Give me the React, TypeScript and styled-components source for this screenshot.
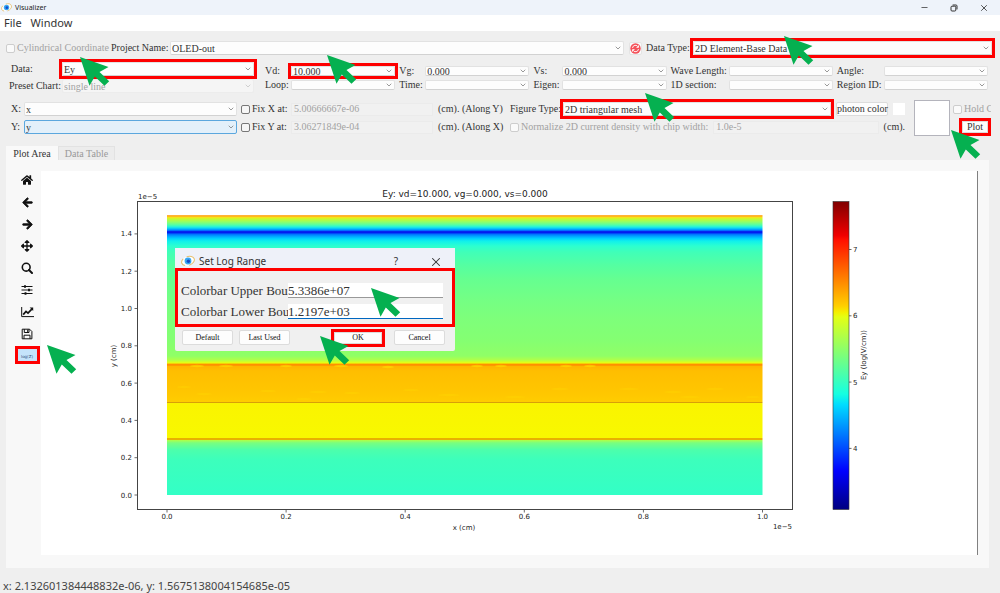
import React from "react";
import styled, { createGlobalStyle, css } from "styled-components";
import { ChevronDown, Minus, X } from "lucide-react";
import { FaHome, FaArrowLeft, FaArrowRight, FaArrowsAlt } from "react-icons/fa";

const GlobalStyle = createGlobalStyle`
  * { box-sizing: border-box; }
  body { margin: 0; background: #efefef; }
  button, input, select { font: inherit; color: inherit; margin: 0; }
`;

const serif = `"Liberation Serif", serif`;
const sans = `"Noto Sans", "Open Sans", sans-serif`;

const marked = css`
  outline: 3px solid #fe0000;
  border-radius: 0;
`;

const Window = styled.div`
  min-height: 100vh;
  display: flex;
  flex-direction: column;
  overflow: hidden;
  background: #efefef;
  color: #333;
  font: 10px/14px ${serif};
`;

const TitleBar = styled.header`
  display: flex;
  align-items: center;
  gap: 3px;
  height: 15px;
  padding: 0 11px 0 1px;
  background: #eef3fa;
  font: 7px/15px ${sans};
  color: #222;
`;

const WindowTitle = styled.h1`
  flex: 1;
  margin: 0;
  font: inherit;
`;

const CaptionButtons = styled.div`
  display: flex;
  gap: 20px;
`;

const CaptionButton = styled.button`
  display: grid;
  place-items: center;
  width: 10px;
  height: 12px;
  padding: 0;
  border: 0;
  background: none;
  color: #333;
`;

const MenuBar = styled.nav`
  display: flex;
  gap: 9px;
  height: 16px;
  padding: 0 4px;
  background: #fff;
`;

const MenuItem = styled.button`
  padding: 0;
  border: 0;
  background: none;
  font: 11px/16px ${sans};
  color: #333;
`;

const Main = styled.main`
  flex: 1;
  display: flex;
  flex-direction: column;
`;

const ProjectRow = styled.div`
  display: grid;
  grid-template-columns: 105px 59px minmax(0, 454fr) 22px 47px minmax(0, 299fr);
  align-items: center;
  height: 14px;
  margin-top: 10px;
  padding: 0 8px 0 6px;
`;

const Label = styled.label<{ $indent?: number }>`
  padding-left: ${(p) => p.$indent ?? 0}px;
  white-space: nowrap;
`;

const CheckLabel = styled.label<{ $disabled?: boolean }>`
  display: flex;
  align-items: center;
  gap: 2px;
  overflow: hidden;
  white-space: nowrap;
  color: ${(p) => (p.$disabled ? "#a2a2a2" : "inherit")};
`;

const Check = styled.input.attrs({ type: "checkbox" })`
  appearance: none;
  flex: none;
  width: 9px;
  height: 9px;
  border: 1px solid #777;
  border-radius: 2px;
  background: #f6f6f6;
  &:disabled {
    border-color: #cdcdcd;
    background: #fafafa;
  }
`;

const SelectFrame = styled.div<{ $marked?: boolean; $height?: number }>`
  position: relative;
  flex: 1;
  min-width: 0;
  height: ${(p) => p.$height ?? 14}px;
  ${(p) => p.$marked && marked}
`;

const SelectInput = styled.select<{ $active?: boolean }>`
  appearance: none;
  display: block;
  width: 100%;
  height: 100%;
  padding: 0 12px 0 1px;
  border: 1px solid ${(p) => (p.$active ? "#5ba7de" : "#e2e2e2")};
  border-bottom-color: ${(p) => (p.$active ? "#5ba7de" : "#d2d2d2")};
  border-radius: 2px;
  background: ${(p) => (p.$active ? "#e3f0fa" : "#fdfdfd")};
  color: #333;
  opacity: 1;
  &:disabled {
    border-color: #ececec;
    background: #f5f5f5;
    color: #a2a2a2;
  }
`;

const Arrow = styled(ChevronDown)`
  position: absolute;
  right: 2px;
  top: 50%;
  margin-top: -4px;
  pointer-events: none;
`;

const RefreshButton = styled.button`
  justify-self: center;
  display: grid;
  place-items: center;
  width: 13px;
  height: 13px;
  padding: 0;
  border: 1px solid #e4e4e4;
  border-radius: 2px;
  background: #fafafa;
`;

const DataRow = styled.div`
  display: grid;
  grid-template-columns: 53px minmax(0, 192fr) minmax(0, 734fr);
  margin-top: 7px;
  padding: 0 12px 0 9px;
`;

const DataFields = styled.div`
  display: grid;
  grid-column: span 2;
  grid-template-columns: 53px minmax(0, 1fr);
  grid-auto-rows: 14px;
  row-gap: 3px;
`;

const BiasFields = styled.div`
  display: grid;
  grid-template-columns: 37px minmax(0, 1fr) 30px minmax(0, 1fr) 33px minmax(0, 1fr) 62px minmax(0, 1fr) 51px minmax(0, 1fr);
  grid-auto-rows: 10px;
  row-gap: 4px;
  padding-top: 4px;
  line-height: 10px;
`;

const AxisRow = styled.div`
  display: grid;
  grid-template-columns: 13px minmax(0, 213fr) 54px minmax(0, 142fr) 77px minmax(0, 395fr) 45px 42px;
  grid-template-rows: 14px 14px;
  row-gap: 4px;
  align-items: center;
  margin-top: 9px;
  padding: 0 8px 0 11px;
`;

const FixCheck = styled(CheckLabel)`
  padding-left: 4px;
`;

const FlatInput = styled.input`
  width: 100%;
  min-width: 0;
  flex: 1;
  height: 13px;
  padding: 0 2px;
  border: 1px solid #ebebeb;
  background: #f1f1f1;
  color: #a2a2a2;
`;

const FigureLine = styled.div`
  display: flex;
  align-items: center;
  gap: 5px;
`;

const FigureLabel = styled(Label)`
  width: 48px;
`;

const Button = styled.button<{ $marked?: boolean }>`
  height: 14px;
  padding: 0;
  border: 1px solid #dcdcdc;
  border-radius: 2px;
  background: #fdfdfd;
  line-height: 12px;
  white-space: nowrap;
  ${(p) => p.$marked && marked}
`;

const PhotonButton = styled(Button)`
  width: 52px;
`;

const Swatch = styled.div`
  width: 12px;
  height: 12px;
  background: #fff;
`;

const Preview = styled.div`
  grid-row: 1 / span 2;
  grid-column: 7;
  place-self: center end;
  width: 36px;
  height: 36px;
  border: 1px solid #b4b4bc;
  background: #fff;
`;

const HoldCell = styled.div`
  grid-column: 8;
  padding: 0 1px 0 3px;
  overflow: hidden;
`;

const PlotCell = styled.div`
  position: relative;
  grid-column: 8;
  padding: 0 4px 0 12px;
`;

const PlotButton = styled(Button)`
  display: block;
  width: 100%;
  height: 12px;
  line-height: 10px;
`;

const Tabs = styled.div`
  display: flex;
  height: 14px;
  margin: 12px 0 0 6px;
`;

const Tab = styled.button<{ $active?: boolean }>`
  width: ${(p) => (p.$active ? 52 : 57)}px;
  padding: 0;
  border: 1px solid ${(p) => (p.$active ? "#f9f9f9" : "#e2e2e2")};
  border-bottom: 0;
  background: ${(p) => (p.$active ? "#f9f9f9" : "#ececec")};
  color: ${(p) => (p.$active ? "#333" : "#999")};
  line-height: 12px;
`;

const PlotPanel = styled.section`
  display: flex;
  align-items: flex-start;
  margin: 0 11px 0 6px;
  padding: 11px 11px 13px 7px;
  background: #f8f8f8;
`;

const ToolBar = styled.div`
  display: flex;
  flex-direction: column;
  align-items: center;
  gap: 8px;
  width: 28px;
  padding-top: 2px;
`;

const Tool = styled.button`
  display: grid;
  place-items: center;
  width: 14px;
  height: 14px;
  padding: 0;
  border: 0;
  background: none;
  color: #111;
`;

const LogTool = styled.div`
  position: relative;
`;

const LogButton = styled.button`
  ${marked}
  display: block;
  width: 19px;
  height: 12px;
  padding: 3px 0 0;
  border: 0;
  background: #c4e3fb;
  color: #2a4a7a;
  font: 4px/6px "DejaVu Sans", sans-serif;
`;

const Canvas = styled.div`
  position: relative;
  flex: 1;
  min-width: 0;
  border-right: 1px solid #808080;
  background: #fff;
`;

const Chart = styled.svg`
  display: block;
  width: 100%;
  height: auto;
  font: 7px "DejaVu Sans", sans-serif;
  fill: #222;
`;

const Dialog = styled.div`
  position: absolute;
  left: 134px;
  top: 77px;
  width: 280px;
  height: 103px;
  border-radius: 2px;
  background: #f0f0f0;
`;

const DialogTitle = styled.div`
  display: flex;
  align-items: center;
  gap: 4px;
  height: 23px;
  padding: 2px 12px 0 6px;
  background: #eef1f9;
  font: 10px/20px ${sans};
`;

const DialogCaption = styled.h2`
  flex: 1;
  margin: 0;
  font: inherit;
`;

const HelpButton = styled(CaptionButton)`
  margin-right: 24px;
  font: 10px/12px ${sans};
`;

const CloseButton = styled(CaptionButton)`
  width: 14px;
`;

const RangeForm = styled.div`
  ${marked}
  display: grid;
  grid-template-columns: 107px 1fr;
  grid-auto-rows: 15px;
  row-gap: 6px;
  height: 53px;
  margin: 0 3px;
  padding: 12px 9px 0 3px;
`;

const RangeLabel = styled.label`
  white-space: nowrap;
  font-size: 13px;
  line-height: 15px;
`;

const RangeInput = styled.input<{ $focused?: boolean }>`
  position: relative;
  min-width: 0;
  width: 100%;
  height: 15px;
  padding: 1px 0 0;
  border: 0;
  border-bottom: 1px solid ${(p) => (p.$focused ? "#0067c0" : "#999")};
  background: #fff;
  font-size: 13px;
`;

const DialogButtons = styled.div`
  display: grid;
  grid-template-columns: 1fr 48px 63px;
  align-items: center;
  height: 27px;
  padding: 0 10px 0 7px;
  font-size: 8px;
`;

const DefaultButtons = styled.div`
  display: flex;
  gap: 6px;
`;

const DialogButton = styled(Button)`
  width: 51px;
  height: 15px;
  color: #111;
`;

const OkButton = styled(DialogButton)`
  width: 48px;
  height: 12px;
  line-height: 10px;
`;

const CancelCell = styled.div`
  display: flex;
  justify-content: flex-end;
`;

const StatusBar = styled.footer`
  height: 25px;
  padding: 0 3px;
  margin-top: auto;
  font: 11px/36px ${sans};
  color: #444;
  white-space: nowrap;
`;

const PointerSvg = styled.svg<{ $x: number; $y: number }>`
  position: absolute;
  z-index: 5;
  left: ${(p) => p.$x}px;
  top: ${(p) => p.$y}px;
  pointer-events: none;
`;

const Pointer = ({ x, y }: { x: number; y: number }) => (
  <PointerSvg $x={x} $y={y} width="30" height="30" viewBox="0 0 30 30" aria-hidden>
    <path d="M0 0L28.5 10L19.5 15L29.2 24.2L24.5 28.8L14.8 19.5L9.5 28.8Z" fill="#05b050" />
  </PointerSvg>
);

const Logo = ({ size }: { size: number }) => (
  <svg width={size} height={size} viewBox="0 0 14 14" aria-hidden>
    <ellipse cx="7" cy="7" rx="6.6" ry="4.4" transform="rotate(-20 7 7)" fill="#fff" stroke="#e6c070" strokeWidth="1" strokeDasharray="9 4" />
    <circle cx="7" cy="7" r="3.4" fill="#38a8f2" />
    <circle cx="7.4" cy="7.2" r="1.7" fill="#1549c8" />
  </svg>
);

type FieldProps = {
  id: string;
  value?: string;
  disabled?: boolean;
  active?: boolean;
  mark?: boolean;
  height?: number;
  pointer?: [number, number];
};

const Select = ({ id, value = "", disabled, active, mark, height, pointer }: FieldProps) => (
  <SelectFrame $marked={mark} $height={height}>
    <SelectInput id={id} disabled={disabled} $active={active} defaultValue={value}>
      <option value={value}>{value}</option>
    </SelectInput>
    <Arrow size={8} color={disabled ? "#bbb" : "#666"} />
    {pointer && <Pointer x={pointer[0]} y={pointer[1]} />}
  </SelectFrame>
);

const biasFields: { label: string; value?: string; mark?: boolean }[] = [
  { label: "Vd:", value: "10.000", mark: true },
  { label: "Vg:", value: "0.000" },
  { label: "Vs:", value: "0.000" },
  { label: "Wave Length:" },
  { label: "Angle:" },
  { label: "Loop:" },
  { label: "Time:" },
  { label: "Eigen:" },
  { label: "1D section:" },
  { label: "Region ID:" },
];

const ZoomIcon = () => (
  <svg width="12" height="12" viewBox="0 0 12 12" fill="none" stroke="#111">
    <circle cx="5.2" cy="5.2" r="3.9" strokeWidth="1.6" />
    <path d="M8 8L11 11" strokeWidth="2" strokeLinecap="round" />
  </svg>
);

const SlidersIcon = () => (
  <svg width="12" height="12" viewBox="0 0 12 12" stroke="#111">
    <path d="M.5 2.5H11.5M.5 6H11.5M.5 9.5H11.5" strokeWidth="1" />
    <path d="M4 1.2V3.8M8 4.7V7.3M4.500 8.2V10.800" strokeWidth="1.9" />
  </svg>
);

const CurveIcon = () => (
  <svg width="13" height="12" viewBox="0 0 13 12" fill="none" stroke="#111">
    <path d="M.7 1V10.6H13" strokeWidth="1" />
    <path d="M2.2 8.6L5 5.4L7 7.1L10.8 3.2" strokeWidth="1.7" />
    <path d="M8.7 1.5H12.2V5Z" fill="#111" stroke="none" />
  </svg>
);

const SaveIcon = () => (
  <svg width="12" height="12" viewBox="0 0 12 12" fill="none" stroke="#111" strokeWidth="1">
    <path d="M1.2 1.2H8.600L10.9 3.5V10.800H1.2Z" strokeLinejoin="round" />
    <path d="M3.3 1.2V4.5H8V1.2M3 10.8V7.2H9V10.8" />
    <path d="M6.7 1.6V4" />
  </svg>
);

const tools = [
  { name: "Home", icon: <FaHome size={12} /> },
  { name: "Back", icon: <FaArrowLeft size={11} stroke="#111" strokeWidth={36} /> },
  { name: "Forward", icon: <FaArrowRight size={11} stroke="#111" strokeWidth={36} /> },
  { name: "Pan", icon: <FaArrowsAlt size={12} /> },
  { name: "Zoom", icon: <ZoomIcon /> },
  { name: "Subplots", icon: <SlidersIcon /> },
  { name: "Customize", icon: <CurveIcon /> },
  { name: "Save", icon: <SaveIcon /> },
];

const fieldStops: [number, string][] = [
  [215, "#ffb040"], [216.5, "#ffb820"], [217.5, "#f0e818"], [219, "#c8f830"],
  [222, "#90ff68"], [225, "#50ffa8"], [227, "#20f0e0"], [229, "#00b8ff"],
  [230.5, "#0070ff"], [231, "#0828f0"], [233, "#0018f0"], [233.8, "#0068ff"],
  [236, "#00a0ff"], [238.500, "#00d0ff"], [241, "#10f0ec"], [246, "#2cffd0"],
  [252, "#40ffb8"], [265, "#54ffa2"], [280, "#66ff90"], [300, "#74ff84"],
  [320, "#7eff7a"], [340, "#84ff72"], [356, "#90ff66"], [360, "#b0ff48"],
  [362.5, "#e0ff18"], [364, "#ffb800"], [364.5, "#ff9000"], [365.5, "#ff9800"],
  [366.5, "#ffb400"], [371, "#ffbe00"], [392, "#ffc600"], [401.5, "#ffcc00"],
  [401.6, "#d8a008"], [403, "#d8a008"], [403.1, "#faf400"], [438, "#f8f800"],
  [438.1, "#e8b000"], [440, "#e8b000"], [440.1, "#b0ff48"], [443, "#78ff80"],
  [450, "#4cffac"], [460, "#3cffbc"], [495, "#33ffc6"],
];

const jetStops: [number, string][] = [
  [0, "#800000"], [0.11, "#f00000"], [0.125, "#ff1000"], [0.34, "#ffd000"],
  [0.36, "#f4f000"], [0.375, "#e4ff14"], [0.5, "#7cff7a"], [0.625, "#15ffe1"],
  [0.66, "#00dcff"], [0.875, "#0000ff"], [0.89, "#0000f0"], [1, "#000080"],
];

const ripples: [number, number, number][] = [
  [197, 366, 7], [226, 366, 7], [286, 366, 6], [341, 366, 7], [388, 367, 6],
  [477, 366, 6], [501, 366, 6], [566, 366, 6], [590, 366, 6], [184, 387, 7],
  [204, 394, 8], [268, 391, 8], [318, 392, 9], [352, 393, 8], [411, 390, 8],
  [449, 395, 11], [515, 397, 10], [560, 389, 9], [629, 389, 10], [673, 392, 9],
  [690, 397, 10], [715, 389, 9], [753, 397, 7], [304, 399, 8],
];

const xTicks = [0, 1, 2, 3, 4, 5];
const yTicks = [0, 1, 2, 3, 4, 5, 6, 7];

const FieldChart = () => (
  <Chart viewBox="41 171 936 384" role="img" aria-label="Ey field map">
    <defs>
      <linearGradient id="field" x1="0" y1="0" x2="0" y2="1">
        {fieldStops.map(([y, color], i) => (
          <stop key={i} offset={(y - 215) / 280} stopColor={color} />
        ))}
      </linearGradient>
      <linearGradient id="jet" x1="0" y1="0" x2="0" y2="1">
        {jetStops.map(([offset, color]) => (
          <stop key={offset} offset={offset} stopColor={color} />
        ))}
      </linearGradient>
    </defs>
    <rect x="167" y="215" width="595.5" height="280" fill="url(#field)" />
    {ripples.map(([x, y, r], i) => (
      <ellipse key={i} cx={x} cy={y} rx={r} ry="1.2" fill="#ffe000" opacity={y < 370 ? 0.55 : 0.25} />
    ))}
    <rect x="137.5" y="201.5" width="655" height="308" fill="none" stroke="#444" />
    <rect x="833" y="201.5" width="16" height="308" fill="url(#jet)" stroke="#333" strokeWidth=".6" />
    <text x="465" y="197" textAnchor="middle" fontSize="9">Ey: vd=10.000, vg=0.000, vs=0.000</text>
    <text x="138" y="199">1e−5</text>
    <text x="792" y="529" textAnchor="end">1e−5</text>
    <text x="464" y="530" textAnchor="middle">x (cm)</text>
    <text transform="translate(116 356) rotate(-90)" textAnchor="middle">y (cm)</text>
    <text transform="translate(866 355) rotate(-90)" textAnchor="middle">Ey (log(V/cm))</text>
    {xTicks.map((i) => (
      <g key={i}>
        <path d={`M${167 + i * 119.1} 510v2.5`} stroke="#444" strokeWidth=".8" />
        <text x={167 + i * 119.1} y="519" textAnchor="middle">{(i * 0.2).toFixed(1)}</text>
      </g>
    ))}
    {yTicks.map((i) => (
      <g key={i}>
        <path d={`M137 ${495 - i * 37.3}h-2.5`} stroke="#444" strokeWidth=".8" />
        <text x="132" y={497.5 - i * 37.3} textAnchor="end">{(i * 0.2).toFixed(1)}</text>
      </g>
    ))}
    {[7, 6, 5, 4].map((n, i) => (
      <g key={n}>
        <path d={`M849 ${249.5 + i * 66.3}h2.5`} stroke="#444" strokeWidth=".8" />
        <text x="853" y={252 + i * 66.3}>{n}</text>
      </g>
    ))}
  </Chart>
);

export default function App() {
  return (
    <Window>
      <GlobalStyle />
      <TitleBar>
        <Logo size={11} />
        <WindowTitle>Visualizer</WindowTitle>
        <CaptionButtons>
          <CaptionButton aria-label="Minimize"><Minus size={9} /></CaptionButton>
          <CaptionButton aria-label="Restore">
            <svg width="8" height="8" viewBox="0 0 8 8" fill="none" stroke="#333" strokeWidth="1">
              <rect x="1" y="2.2" width="4.8" height="4.8" rx="1" />
              <path d="M2.6 1H6Q7 1 7 2V5.4" />
            </svg>
          </CaptionButton>
          <CaptionButton aria-label="Close"><X size={10} /></CaptionButton>
        </CaptionButtons>
      </TitleBar>
      <MenuBar>
        <MenuItem>File</MenuItem>
        <MenuItem>Window</MenuItem>
      </MenuBar>
      <Main>
        <ProjectRow>
          <CheckLabel $disabled><Check disabled />Cylindrical Coordinate</CheckLabel>
          <Label htmlFor="project">Project Name:</Label>
          <Select id="project" value="OLED-out" />
          <RefreshButton aria-label="Refresh">
            <svg width="11" height="11" viewBox="0 0 11 11" fill="none">
              <circle cx="5.5" cy="5.5" r="5.2" fill="#f4525a" />
              <path d="M2.5 5A3 3 0 0 1 8.2 4M8.5 2.4V4.4H6.5M8.5 6A3 3 0 0 1 2.8 7M2.5 8.6V6.6H4.5" stroke="#fff" strokeWidth=".9" />
            </svg>
          </RefreshButton>
          <Label htmlFor="dataType">Data Type:</Label>
          <Select id="dataType" value="2D Element-Base Data" mark pointer={[91, -5]} />
        </ProjectRow>

        <DataRow>
          <DataFields>
            <Label htmlFor="data" $indent={2}>Data:</Label>
            <Select id="data" value="Ey" mark pointer={[18, -5]} />
            <Label htmlFor="preset">Preset Chart:</Label>
            <Select id="preset" value="single line" disabled />
          </DataFields>
          <BiasFields>
            {biasFields.map((f, i) => (
              <React.Fragment key={f.label}>
                <Label htmlFor={`bias${i}`} $indent={i % 5 === 0 ? 11 : 4}>{f.label}</Label>
                <Select id={`bias${i}`} value={f.value} height={10} mark={f.mark} pointer={f.mark ? [36, -11] : undefined} />
              </React.Fragment>
            ))}
          </BiasFields>
        </DataRow>

        <AxisRow>
          <Label htmlFor="xAxis">X:</Label>
          <Select id="xAxis" value="x" />
          <FixCheck><Check />Fix X at:</FixCheck>
          <FlatInput aria-label="Fixed X" defaultValue="5.00666667e-06" disabled />
          <Label $indent={5}>(cm). (Along Y)</Label>
          <FigureLine>
            <FigureLabel htmlFor="figure">Figure Type:</FigureLabel>
            <Select id="figure" value="2D triangular mesh" mark pointer={[82, -9]} />
            <PhotonButton>photon color</PhotonButton>
            <Swatch />
          </FigureLine>
          <Preview />
          <HoldCell><CheckLabel $disabled><Check disabled />Hold C</CheckLabel></HoldCell>

          <Label htmlFor="yAxis">Y:</Label>
          <Select id="yAxis" value="y" active />
          <FixCheck><Check />Fix Y at:</FixCheck>
          <FlatInput aria-label="Fixed Y" defaultValue="3.06271849e-04" disabled />
          <Label $indent={5}>(cm). (Along X)</Label>
          <FigureLine>
            <CheckLabel $disabled><Check disabled />Normalize 2D current density with chip width:</CheckLabel>
            <FlatInput aria-label="Chip width" defaultValue="1.0e-5" disabled />
            <span>(cm).</span>
          </FigureLine>
          <PlotCell>
            <PlotButton $marked>Plot</PlotButton>
            <Pointer x={1} y={9} />
          </PlotCell>
        </AxisRow>

        <Tabs role="tablist">
          <Tab role="tab" $active>Plot Area</Tab>
          <Tab role="tab">Data Table</Tab>
        </Tabs>
        <PlotPanel>
          <ToolBar>
            {tools.map((t) => (
              <Tool key={t.name} aria-label={t.name}>{t.icon}</Tool>
            ))}
            <LogTool>
              <LogButton>log(Z)</LogButton>
              <Pointer x={29} y={-4} />
            </LogTool>
          </ToolBar>
          <Canvas>
            <FieldChart />
            <Dialog role="dialog" aria-label="Set Log Range">
              <DialogTitle>
                <Logo size={14} />
                <DialogCaption>Set Log Range</DialogCaption>
                <HelpButton aria-label="Help">?</HelpButton>
                <CloseButton aria-label="Close dialog"><X size={14} strokeWidth={1.8} /></CloseButton>
              </DialogTitle>
              <RangeForm>
                <RangeLabel htmlFor="upper">Colorbar Upper Bou</RangeLabel>
                <RangeInput id="upper" defaultValue="5.3386e+07" />
                <RangeLabel htmlFor="lower">Colorbar Lower Bou</RangeLabel>
                <RangeInput id="lower" defaultValue="1.2197e+03" $focused />
              </RangeForm>
              <DialogButtons>
                <DefaultButtons>
                  <DialogButton>Default</DialogButton>
                  <DialogButton>Last Used</DialogButton>
                </DefaultButtons>
                <OkButton $marked>OK</OkButton>
                <CancelCell><DialogButton>Cancel</DialogButton></CancelCell>
              </DialogButtons>
              <Pointer x={196} y={40} />
              <Pointer x={145} y={88} />
            </Dialog>
          </Canvas>
        </PlotPanel>
        <StatusBar>x: 2.132601384448832e-06, y: 1.5675138004154685e-05</StatusBar>
      </Main>
    </Window>
  );
}
